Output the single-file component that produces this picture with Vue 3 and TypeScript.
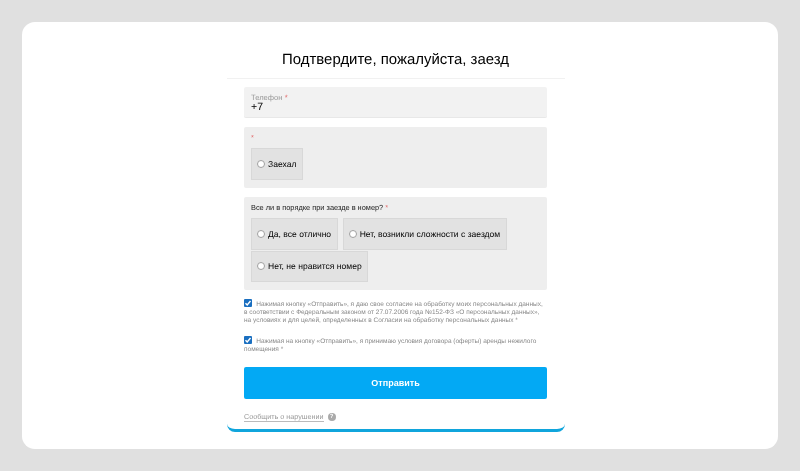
<script setup lang="ts">
const options: string[] = ['Да, все отлично', 'Нет, возникли сложности с заездом', 'Нет, не нравится номер']
</script>

<template>
  <div class="page">
    <main class="card">
      <form class="form" @submit.prevent>
        <h1 class="title">Подтвердите, пожалуйста, заезд</h1>
        <div class="fields">
          <div class="box phone">
            <div class="phone-label">Телефон <span class="req">*</span></div>
            <div class="phone-value">+7</div>
          </div>
          <div class="box group first">
            <div class="group-label"><span class="req">*</span></div>
            <div class="radios">
              <label class="radio"><input type="radio" name="a" /><span>Заехал</span></label>
            </div>
          </div>
          <div class="box group second">
            <div class="group-label">Все ли в порядке при заезде в номер? <span class="req">*</span></div>
            <div class="radios">
              <label v-for="o in options" :key="o" class="radio"><input type="radio" name="b" /><span>{{ o }}</span></label>
            </div>
          </div>
          <label class="consent one">
            <input type="checkbox" checked />
            Нажимая кнопку «Отправить», я даю свое согласие на обработку моих персональных данных, в соответствии с Федеральным законом от 27.07.2006 года №152-ФЗ «О персональных данных», на условиях и для целей, определенных в Согласии на обработку персональных данных *
          </label>
          <label class="consent two">
            <input type="checkbox" checked />
            Нажимая на кнопку «Отправить», я принимаю условия договора (оферты) аренды нежилого помещения *
          </label>
          <button class="submit" type="submit">Отправить</button>
          <div class="report">
            <a class="report-link">Сообщить о нарушении</a>
            <span class="help">?</span>
          </div>
        </div>
      </form>
    </main>
  </div>
</template>

<style scoped>
.page {
  box-sizing: border-box;
  width: 800px;
  height: 471px;
  padding: 22px;
  background: #e0e0e0;
  font-family: "Liberation Sans", Arial, sans-serif;
  text-rendering: geometricPrecision;
}
.card {
  box-sizing: border-box;
  height: 427px;
  background: #fff;
  border-radius: 13px;
  display: flex;
  justify-content: center;
  padding-right: 8px;
}
.form {
  box-sizing: border-box;
  width: 338px;
  height: 410px;
  border-bottom: 3px solid #10a5dc;
  border-radius: 0 0 8px 8px;
  will-change: opacity;
}
.title {
  box-sizing: border-box;
  margin: 0;
  height: 57px;
  padding: 28px 1px 0 0;
  border-bottom: 1px solid #f1f1f1;
  font-size: 14.95px;
  line-height: 20px;
  font-weight: 400;
  color: #000;
  text-align: center;
}
.fields {
  padding: 8px 18px 0 17px;
}
.box {
  box-sizing: border-box;
  border-radius: 2px;
  background: #eeeeee;
}
.phone {
  height: 31px;
  padding: 6px 7px 0;
  background: #f2f2f2;
  border-bottom: 1px solid #e8e8e8;
}
.phone-label {
  font-size: 7.6px;
  line-height: 9px;
  color: #999;
}
.phone-value {
  font-size: 10.5px;
  line-height: 11px;
  color: #000;
}
.req {
  color: #e26a6a;
}
.group {
  margin-top: 9px;
  padding: 6px 7px 0;
}
.first {
  height: 61px;
}
.second {
  height: 93px;
}
.group-label {
  font-size: 7.4px;
  line-height: 10px;
  color: #222;
}
.first .radios {
  margin-top: 5px;
}
.second .radios {
  margin-top: 5px;
}
.radios {
  display: flex;
  flex-wrap: wrap;
  gap: 1px 5px;
}
.radio {
  box-sizing: border-box;
  height: 31.5px;
  display: flex;
  align-items: center;
  gap: 3px;
  padding: 0 5.5px 0 5px;
  background: #e2e2e2;
  border: 1px solid #d8d8d8;
  font-size: 8.56px;
  color: #000;
}
.radio input {
  appearance: none;
  box-sizing: border-box;
  width: 8px;
  height: 8px;
  margin: 0;
  border: 1px solid #a0a0a0;
  border-radius: 50%;
  background: #fff;
}
.consent {
  display: block;
  font-size: 6.5px;
  line-height: 8px;
  color: #888;
}
.consent input {
  appearance: none;
  box-sizing: border-box;
  display: inline-block;
  vertical-align: -1px;
  width: 8px;
  height: 8px;
  margin: 0 2.5px 0 0;
  border-radius: 1px;
  background: #1a6fc0 url("data:image/svg+xml,%3Csvg xmlns='http://www.w3.org/2000/svg' viewBox='0 0 8 8'%3E%3Cpath d='M1.5 4.2 3.2 6 6.5 2' fill='none' stroke='white' stroke-width='1.4'/%3E%3C/svg%3E");
}
.one {
  margin-top: 9px;
}
.two {
  margin-top: 11px;
}
.submit {
  display: block;
  width: 100%;
  height: 32px;
  margin-top: 13px;
  border: 0;
  border-radius: 2px;
  background: #03a9f4;
  color: #fff;
  font: 700 9px "Liberation Sans", Arial, sans-serif;
}
.report {
  display: flex;
  align-items: center;
  gap: 4px;
  margin-top: 13px;
}
.report-link {
  font-size: 7.2px;
  line-height: 9px;
  color: #999;
  border-bottom: 1px solid #bbb;
}
.help {
  width: 8px;
  height: 8px;
  border-radius: 50%;
  background: #aaa;
  color: #fff;
  font-size: 6px;
  line-height: 8px;
  font-weight: 700;
  text-align: center;
}
</style>
